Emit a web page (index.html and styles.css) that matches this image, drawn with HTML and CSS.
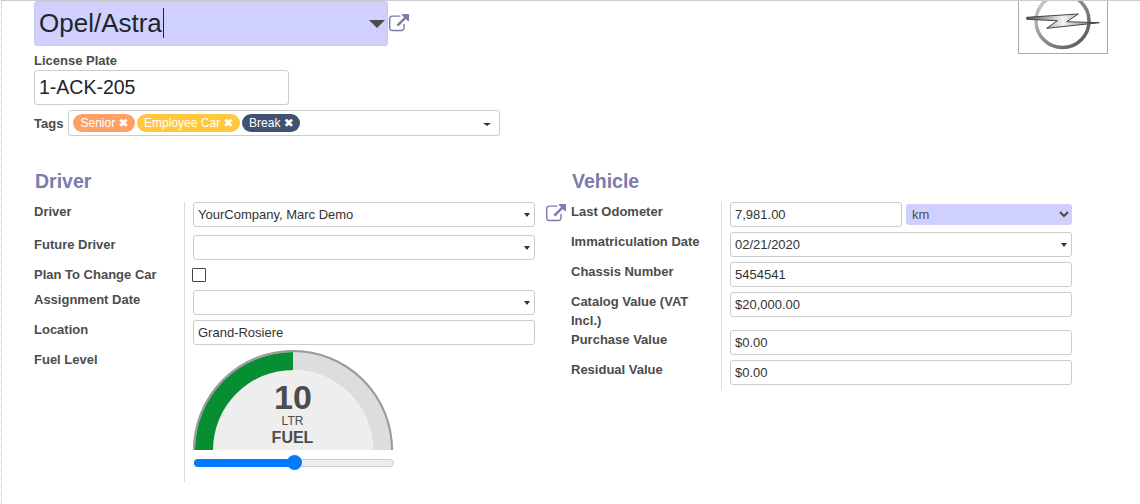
FILE: index.html

```html
<!DOCTYPE html>
<html lang="en">
<head>
  <meta charset="UTF-8">
  <title>Vehicle Form</title>
  <link rel="stylesheet" href="styles.css">
</head>
<body>

<div class="sheet">
  <div class="header">
    <div class="header-fields">
      <div class="title-row">
        <div class="title-field">
          <span class="title-text">Opel/Astra</span>
          <span class="caret caret-big"></span>
        </div>
        <svg class="ext-link ext-title" viewBox="0 0 1792 1792"><path d="M1408 928v320q0 119-84.500 203.500t-203.500 84.500h-832q-119 0-203.500-84.500t-84.500-203.500v-832q0-119 84.500-203.500t203.500-84.500h704q14 0 23 9t9 23v64q0 14-9 23t-23 9h-704q-66 0-113 47t-47 113v832q0 66 47 113t113 47h832q66 0 113-47t47-113v-320q0-14 9-23t23-9h64q14 0 23 9t9 23zm384-864v512q0 26-19 45t-45 19-45-19l-176-176-652 652q-10 10-23 10t-23-10l-114-114q-10-10-10-23t10-23l652-652-176-176q-19-19-19-45t19-45 45-19h512q26 0 45 19t19 45z"/></svg>
      </div>
      <div class="label plate-label">License Plate</div>
      <div class="plate-field">1-ACK-205</div>
      <div class="tags-row">
        <div class="label">Tags</div>
        <div class="tags-field">
          <span class="tag tag-senior">Senior <i class="tag-x">✖</i></span>
          <span class="tag tag-employee">Employee Car <i class="tag-x">✖</i></span>
          <span class="tag tag-break">Break <i class="tag-x">✖</i></span>
          <span class="caret tags-caret"></span>
        </div>
      </div>
    </div>
    <div class="logo">
      <svg width="88" height="53" viewBox="0 0 88 53">
        <defs>
          <linearGradient id="ring" x1="0" y1="0" x2="1" y2="1">
            <stop offset="0" stop-color="#d8d8d8"/>
            <stop offset="0.5" stop-color="#8c8c8c"/>
            <stop offset="1" stop-color="#505050"/>
          </linearGradient>
          <linearGradient id="bolt" x1="0" y1="0" x2="1" y2="0">
            <stop offset="0" stop-color="#555"/>
            <stop offset="0.5" stop-color="#f4f4f4"/>
            <stop offset="1" stop-color="#666"/>
          </linearGradient>
        </defs>
        <circle cx="43.500" cy="20" r="26.500" fill="#fff" stroke="url(#ring)" stroke-width="3.500"/>
        <path d="M7.700 16.300 L59.300 13 L47.700 20.700 L80.300 21.700 L27.700 27.300 L38.300 19.700 L7.700 18.300 Z" fill="url(#bolt)" stroke="#444" stroke-width="1" stroke-linejoin="round"/>
      </svg>
    </div>
  </div>

  <div class="groups">
    <div class="group group-driver">
      <h2 class="group-title">Driver</h2>
      <div class="form-grid">
        <div class="label cell-label">Driver</div>
        <div class="cell cell-tall">
          <div class="field">YourCompany, Marc Demo<span class="caret"></span></div>
        </div>
        <svg class="ext-link ext-driver" viewBox="0 0 1792 1792"><path d="M1408 928v320q0 119-84.500 203.500t-203.500 84.500h-832q-119 0-203.500-84.500t-84.500-203.500v-832q0-119 84.500-203.500t203.500-84.500h704q14 0 23 9t9 23v64q0 14-9 23t-23 9h-704q-66 0-113 47t-47 113v832q0 66 47 113t113 47h832q66 0 113-47t47-113v-320q0-14 9-23t23-9h64q14 0 23 9t9 23zm384-864v512q0 26-19 45t-45 19-45-19l-176-176-652 652q-10 10-23 10t-23-10l-114-114q-10-10-10-23t10-23l652-652-176-176q-19-19-19-45t19-45 45-19h512q26 0 45 19t19 45z"/></svg>

        <div class="label cell-label">Future Driver</div>
        <div class="cell">
          <div class="field"><span class="caret"></span></div>
        </div>

        <div class="label cell-label">Plan To Change Car</div>
        <div class="cell cell-check">
          <span class="checkbox"></span>
        </div>

        <div class="label cell-label">Assignment Date</div>
        <div class="cell">
          <div class="field"><span class="caret"></span></div>
        </div>

        <div class="label cell-label">Location</div>
        <div class="cell">
          <div class="field">Grand-Rosiere</div>
        </div>

        <div class="label cell-label">Fuel Level</div>
        <div class="cell cell-gauge">
          <svg class="gauge" width="200" height="100" viewBox="0 0 200 100">
            <path d="M0 100 A100 100 0 0 1 200 100 L180 100 A80 80 0 0 0 20 100 Z" fill="#dddddd"/>
            <path d="M20 100 A80 80 0 0 1 180 100 Z" fill="#eeeeee"/>
            <path d="M2 100 A98 98 0 0 1 100 2 L100 20 A80 80 0 0 0 20 100 Z" fill="#078e32"/>
            <path d="M1 100 A99 99 0 0 1 199 100" fill="none" stroke="#999" stroke-width="2"/>
            <text class="gauge-value" x="100" y="59" text-anchor="middle">10</text>
            <text class="gauge-unit" x="99.500" y="75" text-anchor="middle">LTR</text>
            <text class="gauge-name" x="99.500" y="93" text-anchor="middle">FUEL</text>
          </svg>
          <div class="slider">
            <div class="slider-fill"></div>
            <div class="slider-thumb"></div>
          </div>
        </div>
      </div>
    </div>

    <div class="group group-vehicle">
      <h2 class="group-title">Vehicle</h2>
      <div class="form-grid">
        <div class="label cell-label">Last Odometer</div>
        <div class="cell cell-odometer">
          <div class="field field-odometer">7,981.00</div>
          <select class="unit-select"><option>km</option></select>
        </div>

        <div class="label cell-label">Immatriculation Date</div>
        <div class="cell">
          <div class="field">02/21/2020<span class="caret"></span></div>
        </div>

        <div class="label cell-label">Chassis Number</div>
        <div class="cell">
          <div class="field">5454541</div>
        </div>

        <div class="label cell-label">Catalog Value (VAT Incl.)</div>
        <div class="cell cell-catalog">
          <div class="field">$20,000.00</div>
        </div>

        <div class="label cell-label">Purchase Value</div>
        <div class="cell">
          <div class="field">$0.00</div>
        </div>

        <div class="label cell-label">Residual Value</div>
        <div class="cell">
          <div class="field">$0.00</div>
        </div>
      </div>
    </div>
  </div>
</div>

</body>
</html>
```

FILE: styles.css

```css
body {
  font-family: "Liberation Sans", Arial, sans-serif;
  font-size: 13px;
  background: #fff;
  color: #4c4c4c;
  margin: 0;
}
.sheet {
  height: 503px;
  overflow: hidden;
  border-top: 1px solid #ccc;
  border-left: 1px dotted #bbb;
  margin-left: 1px;
  padding-left: 32px;
}
.header {
  display: flex;
  justify-content: space-between;
  padding-right: 32px;
}
.header-fields {
  width: 466px;
}
.label {
  font-weight: bold;
  line-height: 19px;
  color: #4c4c4c;
}
.title-row {
  display: flex;
  align-items: flex-start;
}
.title-field {
  position: relative;
  width: 354px;
  height: 45px;
  box-sizing: border-box;
  background: #d0d0ff;
  border: 1px solid #c8c8ec;
  border-radius: 3px;
  padding: 5px 4px;
  font-size: 26px;
  line-height: 33px;
  color: #212529;
}
.title-text {
  border-right: 1px solid #212529;
  padding-right: 1px;
}
.ext-link {
  fill: #7c7bad;
}
.ext-title {
  width: 20px;
  height: 20px;
  margin: 13px 0 0 1px;
}
.plate-label {
  margin-top: 5px;
}
.plate-field {
  width: 255px;
  height: 35px;
  box-sizing: border-box;
  border: 1px solid #ccc;
  border-radius: 3px;
  padding-left: 4px;
  font-size: 19.500px;
  line-height: 33px;
  color: #212529;
}
.tags-row {
  display: flex;
  align-items: center;
  justify-content: space-between;
  margin-top: 5px;
}
.tags-field {
  position: relative;
  display: flex;
  align-items: center;
  gap: 2px;
  width: 432px;
  height: 26px;
  box-sizing: border-box;
  border: 1px solid #ccc;
  border-radius: 3px;
  padding-left: 4px;
}
.tag {
  height: 18px;
  line-height: 18px;
  padding: 0 6px 0 7.500px;
  border-radius: 9px;
  font-size: 12px;
  color: #fff;
  white-space: nowrap;
}
.tag-senior {
  background: #ffa066;
}
.tag-employee {
  background: #ffc83d;
}
.tag-break {
  background: #3f5272;
}
.tag-x {
  font-family: "DejaVu Sans", sans-serif;
  font-style: normal;
  font-size: 12px;
  line-height: 12px;
}
.caret {
  position: absolute;
  right: 4px;
  top: 10px;
  border-top: 4px solid #333;
  border-left: 3.500px solid transparent;
  border-right: 3.500px solid transparent;
}
.caret-big {
  right: 2px;
  top: 18px;
  border-top: 8px solid #4c4c4c;
  border-left: 8.500px solid transparent;
  border-right: 8.500px solid transparent;
}
.tags-caret {
  top: 12px;
  right: 8px;
  border-width: 3.500px 4px 0;
}
.logo {
  width: 90px;
  height: 53px;
  box-sizing: border-box;
  border: 1px solid #aaa;
  border-top: none;
}
.groups {
  display: flex;
  margin-top: 33px;
}
.group-driver {
  width: 537px;
}
.group-title {
  margin: 0 0 9px 1px;
  height: 24px;
  font-size: 19.500px;
  line-height: 24px;
  font-weight: bold;
  color: #7c7bad;
}
.form-grid {
  display: grid;
  grid-template-columns: 150px 351px 36px;
}
.cell-label {
  grid-column: 1;
}
.cell {
  grid-column: 2;
  box-sizing: border-box;
  border-left: 1px solid #ddd;
  padding: 0 0 5px 8px;
}
.cell-tall {
  padding-bottom: 8px;
}
.cell-check {
  height: 25px;
  padding-top: 3px;
}
.cell-catalog {
  padding-bottom: 13px;
}
.field {
  position: relative;
  height: 25px;
  box-sizing: border-box;
  border: 1px solid #ccc;
  border-radius: 3px;
  padding-left: 4px;
  line-height: 23px;
  color: #333;
}
.ext-driver {
  grid-column: 3;
  grid-row: 1;
  width: 20px;
  height: 20px;
  margin: 2px 0 0 11px;
}
.checkbox {
  display: block;
  width: 14px;
  height: 14px;
  box-sizing: border-box;
  margin-left: -1px;
  border: 1px solid #444;
  border-radius: 1px;
}
.cell-gauge {
  height: 132px;
  padding-bottom: 0;
}
.gauge {
  display: block;
}
.gauge-value {
  font-size: 34px;
  font-weight: bold;
  fill: #4c4c4c;
}
.gauge-unit {
  font-size: 12px;
  fill: #4c4c4c;
}
.gauge-name {
  font-size: 16px;
  font-weight: bold;
  fill: #4c4c4c;
}
.slider {
  position: relative;
  width: 200px;
  height: 8px;
  margin: 9px 0 0 1px;
  box-sizing: border-box;
  border: 1px solid #ccc;
  border-radius: 4px;
  background: #eee;
}
.slider-fill {
  width: 100px;
  height: 8px;
  margin: -1px 0 0 -1px;
  border-radius: 4px 0 0 4px;
  background: #007bff;
}
.slider-thumb {
  position: absolute;
  left: 92px;
  top: -5px;
  width: 15px;
  height: 15px;
  border-radius: 50%;
  background: #007bff;
}
.cell-odometer {
  display: flex;
  gap: 4px;
  align-items: flex-start;
}
.field-odometer {
  width: 172px;
  flex: none;
}
.unit-select {
  width: 166px;
  height: 21px;
  margin-top: 2px;
  border: none;
  border-radius: 3px;
  background: #d0d0ff;
  color: #4c4c4c;
  font-family: inherit;
  font-size: 13px;
  padding-left: 2px;
}
```
